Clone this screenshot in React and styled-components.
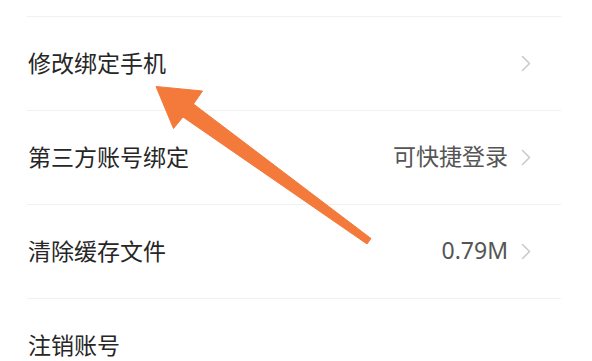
import React from "react";
import styled, { createGlobalStyle } from "styled-components";

const Global = createGlobalStyle`
  html, body { margin: 0; padding: 0; background: #fff; }
  body { font-family: "Noto Sans", "Noto Sans CJK SC", sans-serif; }
`;

const Page = styled.div`
  position: relative;
  width: 592px;
  height: 361px;
  overflow: hidden;
  background: #ffffff;
`;

const TopGap = styled.div`
  height: 16px;
`;

const List = styled.div`
  display: flex;
  flex-direction: column;
  margin: 0 31px 0 27px;
`;

const Row = styled.div`
  height: 94px;
  box-sizing: border-box;
  border-top: 1px solid #f1f1f1;
  display: flex;
  align-items: center;
  padding: 0 30px 3px 1px;
`;

const Label = styled.span`
  flex: 1;
  font-family: "Noto Sans CJK SC", sans-serif;
  font-size: 23px;
  color: #262626;
  line-height: 1;
`;

const Value = styled.span`
  font-family: "Noto Sans", "Noto Sans CJK SC", sans-serif;
  font-size: 23px;
  color: #555555;
  line-height: 1;
  margin-right: 13px;
`;

const ChevronSvg = styled.svg`
  width: 10px;
  height: 17px;
  display: block;
  margin-top: 2px;
`;

const ArrowSvg = styled.svg`
  position: absolute;
  left: 0;
  top: 0;
  pointer-events: none;
`;

const Chevron = () => (
  <ChevronSvg viewBox="0 0 10 17">
    <path d="M1.5 1.5 L8.5 8.5 L1.5 15.5" fill="none" stroke="#c9c9c9" strokeWidth="1.5" strokeLinecap="round" strokeLinejoin="round" />
  </ChevronSvg>
);

const rows = [
  { label: "修改绑定手机", chevron: true },
  { label: "第三方账号绑定", value: "可快捷登录", chevron: true },
  { label: "清除缓存文件", value: "0.79M", chevron: true },
  { label: "注销账号" },
];

export default function App() {
  return (
    <>
      <Global />
      <Page>
        <TopGap />
        <List>
          {rows.map((r) => (
            <Row key={r.label}>
              <Label>{r.label}</Label>
              {r.value && <Value>{r.value}</Value>}
              {r.chevron && <Chevron />}
            </Row>
          ))}
        </List>
        <ArrowSvg width="592" height="361" viewBox="0 0 592 361">
          <path
            d="M156 86.5 L202.5 91 L193.5 104 L371 238.5 L367 244 L183 117 L173.5 128.5 Z"
            fill="#f47a3b"
            stroke="#f47a3b"
            strokeWidth="1"
            strokeLinejoin="round"
          />
        </ArrowSvg>
      </Page>
    </>
  );
}
